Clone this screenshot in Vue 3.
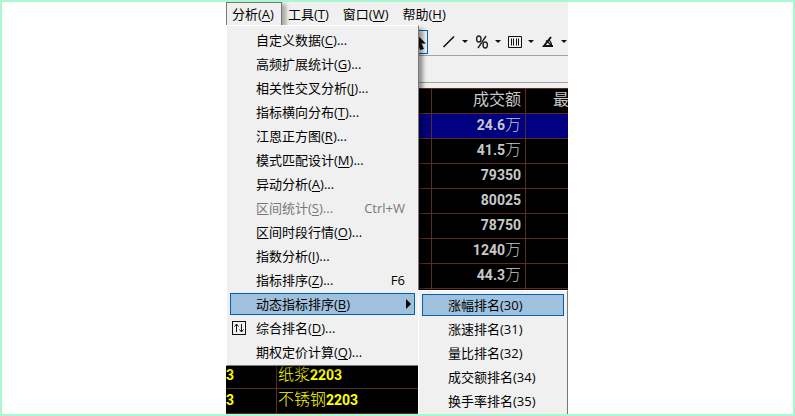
<template>
  <div class="page">
    <main class="window">
      <nav class="menubar">
        <div v-for="menu in menus" :key="menu.key" class="menu">
          <button
              type="button"
              class="menu-title"
              :class="{ open: menu.key === openMenu }"
              @click="openMenu = menu.key"
          >
            {{ menu.label }}(<u>{{ menu.key }}</u>)
          </button>

          <ul v-if="menu.key === openMenu && menu.items" class="popup">
            <li v-for="item in menu.items" :key="item.key" class="popup-row">
              <button
                  type="button"
                  class="popup-item"
                  :class="{ active: item.children }"
                  :disabled="item.disabled"
              >
                <span class="item-icon">
                  <svg v-if="item.icon" width="14" height="14" viewBox="0 0 14 14">
                    <rect x="0.5" y="0.5" width="13" height="13" fill="none" stroke="#111" />
                    <path d="M4.5 11V3M2.5 5.5l2-2.5 2 2.5M9.5 3v8M7.5 8.5l2 2.5 2-2.5" fill="none" stroke="#111" />
                  </svg>
                </span>
                <span>{{ item.label }}(<u>{{ item.key }}</u>){{ item.children ? "" : "..." }}</span>
                <span v-if="item.shortcut" class="shortcut">{{ item.shortcut }}</span>
                <svg v-if="item.children" class="more" width="5" height="10" viewBox="0 0 5 10">
                  <path d="M0 0l5 5-5 5z" />
                </svg>
              </button>

              <ul v-if="item.children" class="popup submenu">
                <li v-for="(child, i) in item.children" :key="child">
                  <button type="button" class="popup-item" :class="{ active: i === 0 }">
                    <span class="item-icon"></span>
                    <span>{{ child }}</span>
                  </button>
                </li>
              </ul>
            </li>
          </ul>
        </div>
      </nav>

      <div class="toolbar">
        <button type="button" class="tool pointer" aria-label="选择">
          <svg width="14" height="18" viewBox="0 0 14 18">
            <path d="M2 0v14l3-3 2 6 4-1-2.500-5.500H13z" fill="#111" />
          </svg>
        </button>
        <span class="separator"></span>
        <button type="button" class="tool" aria-label="直线">
          <svg width="14" height="14" viewBox="0 0 14 14">
            <path d="M1.500 12L12 1.500" stroke="#111" stroke-width="1.6" />
          </svg>
          <span class="caret"></span>
        </button>
        <button type="button" class="tool" aria-label="百分比">
          <svg width="14" height="14" viewBox="0 0 14 14" fill="none" stroke="#222">
            <ellipse cx="3.800" cy="4" rx="2.200" ry="3" stroke-width="1.4" />
            <ellipse cx="10.200" cy="10" rx="2.200" ry="3" stroke-width="1.4" />
            <path d="M11 1L3 13" stroke-width="1.4" />
          </svg>
          <span class="caret"></span>
        </button>
        <button type="button" class="tool" aria-label="周期线">
          <svg width="14" height="14" viewBox="0 0 14 14" fill="none" stroke="#111">
            <path d="M0.5 1.5h13v11H0.5zM3.5 3.5v7M5.5 3.5v7M8.5 3.5v7M10.5 3.5v7" />
          </svg>
          <span class="caret"></span>
        </button>
        <button type="button" class="tool" aria-label="角度线">
          <svg width="14" height="14" viewBox="0 0 14 14" fill="none" stroke="#111">
            <path d="M10 2L3 11h9" stroke-width="2" />
            <path d="M5 5.5l5.5 5M7.5 5c2 1 3 3 3 6" stroke-width="1.3" />
          </svg>
          <span class="caret"></span>
        </button>
      </div>
      <div class="strip"></div>

      <table class="quotes">
        <colgroup>
          <col class="col-code" />
          <col class="col-name" />
          <col class="col-amount" />
          <col />
        </colgroup>
        <thead>
          <tr>
            <th></th>
            <th></th>
            <th class="amount">成交额</th>
            <th class="latest">最</th>
          </tr>
        </thead>
        <tbody>
          <tr v-for="(row, i) in rows" :key="i" :class="{ selected: i === 0 }">
            <td class="code">{{ row.code }}</td>
            <td class="name"><span class="han">{{ row.name }}</span>{{ row.month }}</td>
            <td class="amount">{{ row.amount }}<span class="han">{{ row.unit }}</span></td>
            <td></td>
          </tr>
        </tbody>
      </table>
    </main>
  </div>
</template>

<script setup>
import { ref } from "vue";

const openMenu = ref("A");

const menus = [
  {
    label: "分析",
    key: "A",
    items: [
      { label: "自定义数据", key: "C" },
      { label: "高频扩展统计", key: "G" },
      { label: "相关性交叉分析", key: "J" },
      { label: "指标横向分布", key: "T" },
      { label: "江恩正方图", key: "R" },
      { label: "模式匹配设计", key: "M" },
      { label: "异动分析", key: "A" },
      { label: "区间统计", key: "S", shortcut: "Ctrl+W", disabled: true },
      { label: "区间时段行情", key: "O" },
      { label: "指数分析", key: "I" },
      { label: "指标排序", key: "Z", shortcut: "F6" },
      {
        label: "动态指标排序",
        key: "B",
        children: ["涨幅排名(30)", "涨速排名(31)", "量比排名(32)", "成交额排名(34)", "换手率排名(35)"],
      },
      { label: "综合排名", key: "D", icon: true },
      { label: "期权定价计算", key: "Q" },
    ],
  },
  { label: "工具", key: "T" },
  { label: "窗口", key: "W" },
  { label: "帮助", key: "H" },
];

const rows = [
  { amount: "24.6", unit: "万" },
  { amount: "41.5", unit: "万" },
  { amount: "79350" },
  { amount: "80025" },
  { amount: "78750" },
  { amount: "1240", unit: "万" },
  { amount: "44.3", unit: "万" },
  {},
  {},
  {},
  { code: "3", name: "纸浆", month: "2203" },
  { code: "3", name: "不锈钢", month: "2203" },
];
</script>

<style>
body {
  background: #fff;
}
</style>

<style scoped>
.page {
  box-sizing: border-box;
  min-height: 100vh;
  padding-right: 1px;
  border: 2px solid #aaf8d2;
  display: flex;
  justify-content: center;
  font-family: "Open Sans", "Noto Sans CJK SC", sans-serif;
  font-size: 13px;
  color: #000;
}

.window {
  width: 43vw;
  min-width: 342px;
  background: #f0f0f0;
  overflow: hidden;
}

button {
  font: inherit;
  color: inherit;
  border: none;
  background: none;
  margin: 0;
}

u {
  text-underline-offset: 2px;
}

.menubar {
  display: flex;
  height: 24px;
}

.menu {
  position: relative;
}

.menu-title {
  height: 24px;
  padding: 0 8px 0 6px;
  line-height: 24px;
  white-space: nowrap;
}

.menu-title.open {
  box-shadow: inset 1px 1px #777, inset -1px 0 #777, 4px 2px 4px rgba(0, 0, 0, 0.3);
}

.popup {
  position: absolute;
  z-index: 2;
  top: 23px;
  left: 0;
  box-sizing: border-box;
  min-width: 193px;
  margin: 0;
  padding: 2px 3px 1px;
  list-style: none;
  background: #f0f0f0;
  border: 1px solid;
  border-color: #fff #777 #777 #fff;
  box-shadow: 4px 4px 4px rgba(0, 0, 0, 0.4);
}

.popup-row {
  position: relative;
}

.submenu {
  top: -2px;
  left: calc(100% + 3px);
  min-width: 150px;
  box-shadow: none;
}

.popup li {
  padding: 1px 0;
}

.popup-item {
  display: flex;
  align-items: center;
  box-sizing: border-box;
  width: 100%;
  height: 22px;
  padding: 0 9px 0 0;
  border: 1px solid transparent;
  line-height: 20px;
  white-space: nowrap;
}

.popup-item.active {
  background: #a0c1dd;
  border-color: #0063b1;
}

.popup-item:disabled {
  color: #777;
}

.item-icon {
  display: flex;
  box-sizing: border-box;
  width: 25px;
  padding-left: 1px;
}

.shortcut {
  margin-left: auto;
}

.more {
  margin-left: auto;
  margin-right: -6px;
}

.toolbar {
  display: flex;
  align-items: center;
  box-sizing: border-box;
  height: 30px;
  padding-top: 2px;
  padding-left: 179px;
  border-bottom: 1px solid #a0a0a0;
}

.tool {
  display: flex;
  align-items: center;
  gap: 6px;
  padding: 0 7px 0 0;
}

.pointer {
  box-sizing: border-box;
  width: 24px;
  height: 24px;
  padding: 0 0 0 7px;
  border: 1px solid #0063b1;
}

.separator {
  width: 1px;
  height: 24px;
  margin: 0 11px 0 3px;
  background: #a0a0a0;
}

.caret {
  border: 3px solid transparent;
  border-top-color: #111;
  border-bottom: none;
}

.strip {
  height: 26px;
  margin-bottom: 5px;
  border-bottom: 1px solid #a0a0a0;
}

.quotes {
  width: 100%;
  table-layout: fixed;
  border-spacing: 0;
  border-top: 1px solid #5a2d1e;
  background: #000;
  font-family: Roboto, "Noto Sans CJK SC", sans-serif;
  font-size: 14px;
  font-weight: 700;
}

.col-code {
  width: 51px;
}

.col-name {
  width: 155px;
}

.col-amount {
  width: 94px;
}

.quotes th,
.quotes td {
  box-sizing: border-box;
  height: 25px;
  padding: 0 0 2px;
  border-right: 1px solid #5a2d1e;
  border-bottom: 1px solid #5a2d1e;
  line-height: 22px;
  white-space: nowrap;
  overflow: hidden;
}

.quotes th:last-child,
.quotes td:last-child {
  border-right: none;
}

.quotes th,
.han {
  font-size: 16px;
  font-weight: 300;
  color: #c8c8c8;
  line-height: 20px;
}

.quotes th {
  font-weight: 400;
}

.selected {
  background: #000080;
}

.quotes .amount {
  padding-right: 4px;
  text-align: right;
  color: #c8c8c8;
}

.quotes .latest {
  padding-left: 27px;
  text-align: left;
}

.quotes .code,
.quotes .name,
.name .han {
  color: #ff0;
}

.quotes .name {
  padding-left: 1px;
}
</style>
